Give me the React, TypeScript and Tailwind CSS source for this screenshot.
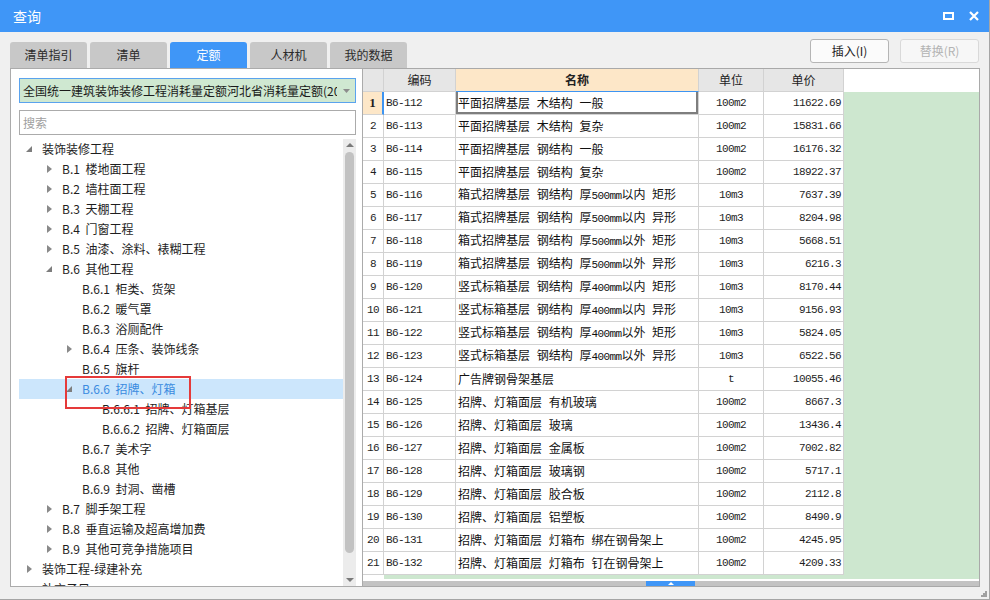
import React from 'react';

type TNode = { level: number; label: string; arrow?: 'open' | 'closed'; selected?: boolean };

const tree: TNode[] = [
  { level: 0, label: '装饰装修工程', arrow: 'open' },
  { level: 1, label: 'B.1 楼地面工程', arrow: 'closed' },
  { level: 1, label: 'B.2 墙柱面工程', arrow: 'closed' },
  { level: 1, label: 'B.3 天棚工程', arrow: 'closed' },
  { level: 1, label: 'B.4 门窗工程', arrow: 'closed' },
  { level: 1, label: 'B.5 油漆、涂料、裱糊工程', arrow: 'closed' },
  { level: 1, label: 'B.6 其他工程', arrow: 'open' },
  { level: 2, label: 'B.6.1 柜类、货架' },
  { level: 2, label: 'B.6.2 暖气罩' },
  { level: 2, label: 'B.6.3 浴厕配件' },
  { level: 2, label: 'B.6.4 压条、装饰线条', arrow: 'closed' },
  { level: 2, label: 'B.6.5 旗杆' },
  { level: 2, label: 'B.6.6 招牌、灯箱', arrow: 'open', selected: true },
  { level: 3, label: 'B.6.6.1 招牌、灯箱基层' },
  { level: 3, label: 'B.6.6.2 招牌、灯箱面层' },
  { level: 2, label: 'B.6.7 美术字' },
  { level: 2, label: 'B.6.8 其他' },
  { level: 2, label: 'B.6.9 封洞、凿槽' },
  { level: 1, label: 'B.7 脚手架工程', arrow: 'closed' },
  { level: 1, label: 'B.8 垂直运输及超高增加费', arrow: 'closed' },
  { level: 1, label: 'B.9 其他可竞争措施项目', arrow: 'closed' },
  { level: 0, label: '装饰工程-绿建补充', arrow: 'closed' },
  { level: 0, label: '补充子目' },
];

const indent = ['pl-[3px]', 'pl-[23px]', 'pl-[43px]', 'pl-[63px]'];

const rows: [string, string, string, string][] = [
  ['B6-112', '平面招牌基层 木结构 一般', '100m2', '11622.69'],
  ['B6-113', '平面招牌基层 木结构 复杂', '100m2', '15831.66'],
  ['B6-114', '平面招牌基层 钢结构 一般', '100m2', '16176.32'],
  ['B6-115', '平面招牌基层 钢结构 复杂', '100m2', '18922.37'],
  ['B6-116', '箱式招牌基层 钢结构 厚500mm以内 矩形', '10m3', '7637.39'],
  ['B6-117', '箱式招牌基层 钢结构 厚500mm以内 异形', '10m3', '8204.98'],
  ['B6-118', '箱式招牌基层 钢结构 厚500mm以外 矩形', '10m3', '5668.51'],
  ['B6-119', '箱式招牌基层 钢结构 厚500mm以外 异形', '10m3', '6216.3'],
  ['B6-120', '竖式标箱基层 钢结构 厚400mm以内 矩形', '10m3', '8170.44'],
  ['B6-121', '竖式标箱基层 钢结构 厚400mm以内 异形', '10m3', '9156.93'],
  ['B6-122', '竖式标箱基层 钢结构 厚400mm以外 矩形', '10m3', '5824.05'],
  ['B6-123', '竖式标箱基层 钢结构 厚400mm以外 异形', '10m3', '6522.56'],
  ['B6-124', '广告牌钢骨架基层', 't', '10055.46'],
  ['B6-125', '招牌、灯箱面层 有机玻璃', '100m2', '8667.3'],
  ['B6-126', '招牌、灯箱面层 玻璃', '100m2', '13436.4'],
  ['B6-127', '招牌、灯箱面层 金属板', '100m2', '7002.82'],
  ['B6-128', '招牌、灯箱面层 玻璃钢', '100m2', '5717.1'],
  ['B6-129', '招牌、灯箱面层 胶合板', '100m2', '2112.8'],
  ['B6-130', '招牌、灯箱面层 铝塑板', '100m2', '8490.9'],
  ['B6-131', '招牌、灯箱面层 灯箱布 绑在钢骨架上', '100m2', '4245.95'],
  ['B6-132', '招牌、灯箱面层 灯箱布 钉在钢骨架上', '100m2', '4209.33'],
];

const mono = "font-['Liberation_Mono','Noto_Sans_CJK_SC',monospace] text-[11px] tracking-[-0.6px]";

function Name({ text }: { text: string }) {
  const parts = text.split(/(\d+mm)/);
  return (
    <span className="[word-spacing:4px]">
      {parts.map((p, i) =>
        /^\d+mm$/.test(p) ? (
          <span key={i} className={mono}>
            {p}
          </span>
        ) : (
          <React.Fragment key={i}>{p}</React.Fragment>
        )
      )}
    </span>
  );
}

function TitleBar() {
  return (
    <div className="h-[32px] bg-[#3f96f7] flex items-center justify-between pl-[13px] pr-[10px]">
      <span className="text-white text-[14px]">查询</span>
      <div className="flex items-center gap-[15px]">
        <svg width="11" height="8" viewBox="0 0 11 8">
          <rect x="1" y="1" width="9" height="6" fill="none" stroke="white" strokeWidth="2" />
        </svg>
        <svg width="10" height="10" viewBox="0 0 10 10">
          <path d="M1 1L9 9M9 1L1 9" stroke="white" strokeWidth="2.2" />
        </svg>
      </div>
    </div>
  );
}

function Tabs() {
  const tabs = ['清单指引', '清单', '定额', '人材机', '我的数据'];
  return (
    <div className="self-end flex gap-[3px] h-[26px]">
      {tabs.map((t) => (
        <div
          key={t}
          className={
            t === '定额'
              ? 'w-[77px] h-full rounded-t-[3px] bg-[#3f96f7] text-white flex items-center justify-center text-[12px]'
              : 'w-[77px] h-full rounded-t-[3px] bg-[#c8c8c8] text-[#2b2b2b] flex items-center justify-center text-[12px]'
          }
        >
          {t}
        </div>
      ))}
    </div>
  );
}

function Buttons() {
  return (
    <div className="flex gap-[11px] mt-[7px] mr-[1px] h-[24px]">
      <div className="w-[79px] h-full border border-[#b5b5b5] rounded-[3px] bg-[#fbfbfb] flex items-center justify-center text-[12px] text-[#222]">
        插入(I)
      </div>
      <div className="w-[79px] h-full border border-[#d9d9d9] rounded-[3px] bg-[#f7f7f7] flex items-center justify-center text-[12px] text-[#b3b3b3]">
        替换(R)
      </div>
    </div>
  );
}

function Arrow({ kind }: { kind?: 'open' | 'closed' }) {
  if (kind === 'closed')
    return (
      <svg width="5" height="8" viewBox="0 0 5 8">
        <path d="M0 0L5 4L0 8Z" fill="#8a8a8a" />
      </svg>
    );
  if (kind === 'open')
    return (
      <svg width="6" height="6" viewBox="0 0 6 6">
        <path d="M6 0L6 6L0 6Z" fill="#7d7d7d" />
      </svg>
    );
  return null;
}

function LeftPanel() {
  return (
    <div className="w-[353px] h-full border border-[#ababab] bg-white flex flex-col pt-[9px] pl-[8px] pr-[6px]">
      <div className="h-[25px] border border-[#5aa3ee] bg-[#cfe8d1] flex items-center">
        <div className="flex-1 overflow-hidden whitespace-nowrap pl-[3px] text-[12px] text-[#1a1a1a]">
          全国统一建筑装饰装修工程消耗量定额河北省消耗量定额(2012)
        </div>
        <div className="w-[18px] flex items-center justify-center">
          <svg width="7" height="4" viewBox="0 0 7 4">
            <path d="M0 0L7 0L3.5 4Z" fill="#8c8c8c" />
          </svg>
        </div>
      </div>
      <div className="mt-[7px] h-[25px] border border-[#ababab] bg-white flex items-center pl-[3px] text-[12px] text-[#a0a0a0]">
        搜索
      </div>
      <div className="mt-[4px] flex-1 min-h-0 flex">
        <div className="flex-1 overflow-hidden">
          {tree.map((n, i) => (
            <div
              key={i}
              className={
                'h-[20px] flex items-center whitespace-nowrap ' +
                indent[n.level] +
                (n.selected ? ' bg-[#cce6fc] text-[#3a8be0]' : ' text-[#1e1e1e]')
              }
            >
              <span className="w-[14px] flex items-center justify-center">
                <Arrow kind={n.arrow} />
              </span>
              <span className="ml-[6px] text-[12px] [word-spacing:3px]">{n.label}</span>
            </div>
          ))}
        </div>
        <div className="w-[13px] bg-[#ececec] flex flex-col items-center">
          <div className="h-[12px] flex items-center justify-center">
            <svg width="8" height="4" viewBox="0 0 8 4">
              <path d="M0 4L4 0L8 4Z" fill="#7a7a7a" />
            </svg>
          </div>
          <div className="mt-[1px] w-[9px] h-[401px] rounded-full bg-[#c2c2c2]" />
          <div className="flex-1" />
          <div className="h-[12px] flex items-center justify-center">
            <svg width="8" height="4" viewBox="0 0 8 4">
              <path d="M0 0L8 0L4 4Z" fill="#7a7a7a" />
            </svg>
          </div>
        </div>
      </div>
    </div>
  );
}

function Table() {
  const cell = 'border-r border-b border-[#d2d2d2] h-full flex items-center';
  return (
    <div className="w-[617px] h-full border-t border-r border-b border-[#a9a9a9] bg-white flex flex-col">
      <div className="h-[23px] flex text-[12px] text-[#222]">
        <div className={cell + ' w-[21px] bg-[#e6e6e6]'} />
        <div className={cell + ' w-[72px] bg-[#e6e6e6] justify-center'}>编码</div>
        <div className="w-[243px] h-full border-r border-[#d2d2d2] border-b border-b-[#3d94f2] bg-[#fde7c8] flex items-center justify-center font-bold">
          名称
        </div>
        <div className={cell + ' w-[65px] bg-[#e6e6e6] justify-center'}>单位</div>
        <div className={cell + ' w-[80px] bg-[#e6e6e6] justify-center'}>单价</div>
        <div className="flex-1 bg-white" />
      </div>
      <div className="flex-1 flex flex-col bg-[#cde7cf]">
        {rows.map((r, i) => (
          <div key={i} className="h-[23px] flex">
            {i === 0 ? (
              <div className="w-[21px] h-full border-r-2 border-r-[#3d94f2] border-b border-b-[#d2d2d2] bg-[#fde7c8] flex items-center justify-center font-['Liberation_Serif',serif] font-bold text-[13px]">
                1
              </div>
            ) : (
              <div className={cell + ' w-[21px] bg-white justify-center ' + mono}>{i + 1}</div>
            )}
            <div className={cell + ' w-[72px] bg-white pl-[2px] ' + mono}>{r[0]}</div>
            <div
              className={
                cell +
                ' w-[243px] bg-white pl-[2px] text-[12px] text-[#111] whitespace-nowrap' +
                (i === 0 ? ' shadow-[inset_2px_-2px_0_#7e7e7e,inset_-2px_0_0_#7e7e7e]' : '')
              }
            >
              <Name text={r[1]} />
            </div>
            <div className={cell + ' w-[65px] bg-white justify-center ' + mono}>{r[2]}</div>
            <div className={cell + ' w-[80px] bg-white justify-end pr-[2px] ' + mono}>{r[3]}</div>
            <div className="flex-1" />
          </div>
        ))}
        <div className="h-[4px] flex">
          <div className="w-[21px] bg-white" />
          <div className="flex-1" />
        </div>
        <div className="h-[2px] bg-white" />
        <div className="h-[5px] flex bg-[#c3c3c3]">
          <div className="w-[283px]" />
          <div className="w-[49px] bg-[#3f96f7] flex items-center justify-center">
            <svg width="6" height="3" viewBox="0 0 6 3">
              <path d="M0 3L3 0L6 3Z" fill="white" />
            </svg>
          </div>
          <div className="flex-1" />
        </div>
      </div>
    </div>
  );
}

export default function App() {
  return (
    <div className="relative w-[990px] h-[600px] bg-[#f0f0f0] border-r border-b border-[#a5a5a5] overflow-hidden font-['Noto_Sans_CJK_SC',sans-serif] text-[12px] text-[#1e1e1e]">
      <TitleBar />
      <div className="pl-[10px] pr-[9px]">
        <div className="h-[36px] flex justify-between">
          <Tabs />
          <Buttons />
        </div>
        <div className="flex h-[519px]">
          <LeftPanel />
          <Table />
        </div>
      </div>
      <div className="absolute left-[65px] top-[376px] w-[126px] h-[33px] border-2 border-[#e53a3a]" />
      <svg className="absolute right-[2px] bottom-[2px]" width="7" height="7" viewBox="0 0 7 7">
        <rect x="5" y="1" width="2" height="2" fill="#a0a0a0" />
        <rect x="3" y="3" width="2" height="2" fill="#a0a0a0" />
        <rect x="5" y="3" width="2" height="2" fill="#a0a0a0" />
        <rect x="1" y="5" width="2" height="2" fill="#a0a0a0" />
        <rect x="3" y="5" width="2" height="2" fill="#a0a0a0" />
        <rect x="5" y="5" width="2" height="2" fill="#a0a0a0" />
      </svg>
    </div>
  );
}
